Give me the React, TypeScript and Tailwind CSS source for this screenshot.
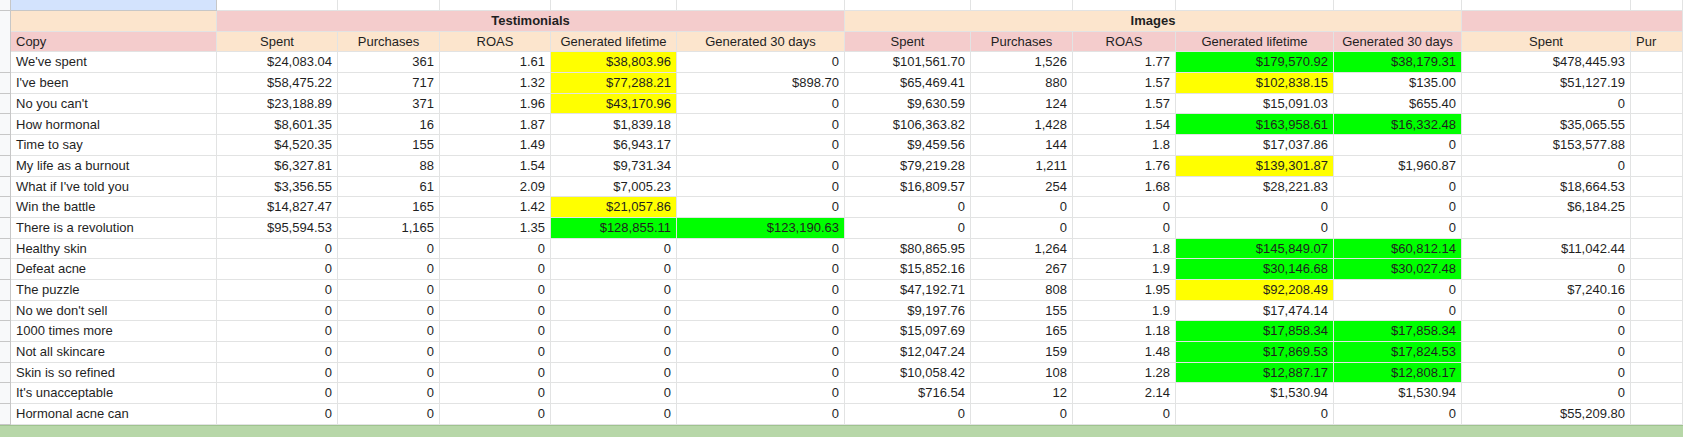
const Y = "bg-[#ffff00]";
const G = "bg-[#00ff00]";

type Row = { c: string; v: (string | [string, string])[] };

const rows: Row[] = [
  { c: "We've spent", v: ["$24,083.04", "361", "1.61", ["$38,803.96", Y], "0", "$101,561.70", "1,526", "1.77", ["$179,570.92", G], ["$38,179.31", G], "$478,445.93"] },
  { c: "I've been", v: ["$58,475.22", "717", "1.32", ["$77,288.21", Y], "$898.70", "$65,469.41", "880", "1.57", ["$102,838.15", Y], "$135.00", "$51,127.19"] },
  { c: "No you can't", v: ["$23,188.89", "371", "1.96", ["$43,170.96", Y], "0", "$9,630.59", "124", "1.57", "$15,091.03", "$655.40", "0"] },
  { c: "How hormonal", v: ["$8,601.35", "16", "1.87", "$1,839.18", "0", "$106,363.82", "1,428", "1.54", ["$163,958.61", G], ["$16,332.48", G], "$35,065.55"] },
  { c: "Time to say", v: ["$4,520.35", "155", "1.49", "$6,943.17", "0", "$9,459.56", "144", "1.8", "$17,037.86", "0", "$153,577.88"] },
  { c: "My life as a burnout", v: ["$6,327.81", "88", "1.54", "$9,731.34", "0", "$79,219.28", "1,211", "1.76", ["$139,301.87", Y], "$1,960.87", "0"] },
  { c: "What if I've told you", v: ["$3,356.55", "61", "2.09", "$7,005.23", "0", "$16,809.57", "254", "1.68", "$28,221.83", "0", "$18,664.53"] },
  { c: "Win the battle", v: ["$14,827.47", "165", "1.42", ["$21,057.86", Y], "0", "0", "0", "0", "0", "0", "$6,184.25"] },
  { c: "There is a revolution", v: ["$95,594.53", "1,165", "1.35", ["$128,855.11", G], ["$123,190.63", G], "0", "0", "0", "0", "0", ""] },
  { c: "Healthy skin", v: ["0", "0", "0", "0", "0", "$80,865.95", "1,264", "1.8", ["$145,849.07", G], ["$60,812.14", G], "$11,042.44"] },
  { c: "Defeat acne", v: ["0", "0", "0", "0", "0", "$15,852.16", "267", "1.9", ["$30,146.68", G], ["$30,027.48", G], "0"] },
  { c: "The puzzle", v: ["0", "0", "0", "0", "0", "$47,192.71", "808", "1.95", ["$92,208.49", Y], "0", "$7,240.16"] },
  { c: "No we don't sell", v: ["0", "0", "0", "0", "0", "$9,197.76", "155", "1.9", "$17,474.14", "0", "0"] },
  { c: "1000 times more", v: ["0", "0", "0", "0", "0", "$15,097.69", "165", "1.18", ["$17,858.34", G], ["$17,858.34", G], "0"] },
  { c: "Not all skincare", v: ["0", "0", "0", "0", "0", "$12,047.24", "159", "1.48", ["$17,869.53", G], ["$17,824.53", G], "0"] },
  { c: "Skin is so refined", v: ["0", "0", "0", "0", "0", "$10,058.42", "108", "1.28", ["$12,887.17", G], ["$12,808.17", G], "0"] },
  { c: "It's unacceptable", v: ["0", "0", "0", "0", "0", "$716.54", "12", "2.14", "$1,530.94", "$1,530.94", "0"] },
  { c: "Hormonal acne can", v: ["0", "0", "0", "0", "0", "0", "0", "0", "0", "0", "$55,209.80"] },
];

const cols = "grid-cols-[11px_206px_121px_102px_111px_126px_168px_126px_102px_103px_158px_128px_169px_1fr]";
const heads = ["Spent", "Purchases", "ROAS", "Generated lifetime", "Generated 30 days", "Spent", "Purchases", "ROAS", "Generated lifetime", "Generated 30 days", "Spent"];
const cell = "h-[20.7px] border-r border-b border-[#e2e3e3] px-[5px] flex items-center whitespace-nowrap overflow-hidden";
const PEACH = "bg-[#fce5cd]";
const PINK = "bg-[#f4cccc]";

export default function App() {
  return (
    <div className="w-[1683px] h-[437px] overflow-hidden bg-white text-[13px] text-[#1f1f1f]" style={{ fontFamily: "Arial, 'Liberation Sans', sans-serif" }}>
      <div className={`grid ${cols} h-[11px]`}>
        <div className="bg-[#f8f9fa] border-r border-b border-[#c7c7c7]" />
        <div className="bg-[#d3e3fd] border-r border-b border-[#c7c7c7]" />
        {Array.from({ length: 12 }).map((_, i) => (
          <div key={i} className="bg-white border-r border-b border-[#e2e3e3]" />
        ))}
      </div>
      <div className={`grid ${cols}`}>
        <div className="bg-[#f8f9fa] border-r border-[#c7c7c7]" />
        <div className={`${cell} ${PEACH}`} />
        <div className={`${cell} ${PINK} col-span-5 justify-center font-bold`}>Testimonials</div>
        <div className={`${cell} ${PEACH} col-span-5 justify-center font-bold`}>Images</div>
        <div className={`${cell} ${PINK} col-span-2`} />
        <div className="bg-[#f8f9fa] border-r border-[#c7c7c7]" />
        <div className={`${cell} ${PINK}`}>Copy</div>
        {heads.map((h, i) => (
          <div key={i} className={`${cell} justify-center ${i < 5 || i === 10 ? PEACH : PINK}`}>{h}</div>
        ))}
        <div className={`${cell} ${PEACH}`}>Pur</div>
        {rows.map((r, ri) => (
          <>
            <div key={`n${ri}`} className="bg-[#f8f9fa] border-r border-b border-[#c7c7c7]" />
            <div key={`c${ri}`} className={cell}>{r.c}</div>
            {r.v.map((v, vi) => {
              const [t, bg] = typeof v === "string" ? [v, ""] : v;
              return (
                <div key={`${ri}-${vi}`} className={`${cell} justify-end ${bg}`}>{t}</div>
              );
            })}
            <div key={`e${ri}`} className={cell} />
          </>
        ))}
      </div>
      <div className="h-[12px] bg-[#b7d7a8] border-t border-[#9fc38f]" />
    </div>
  );
}
